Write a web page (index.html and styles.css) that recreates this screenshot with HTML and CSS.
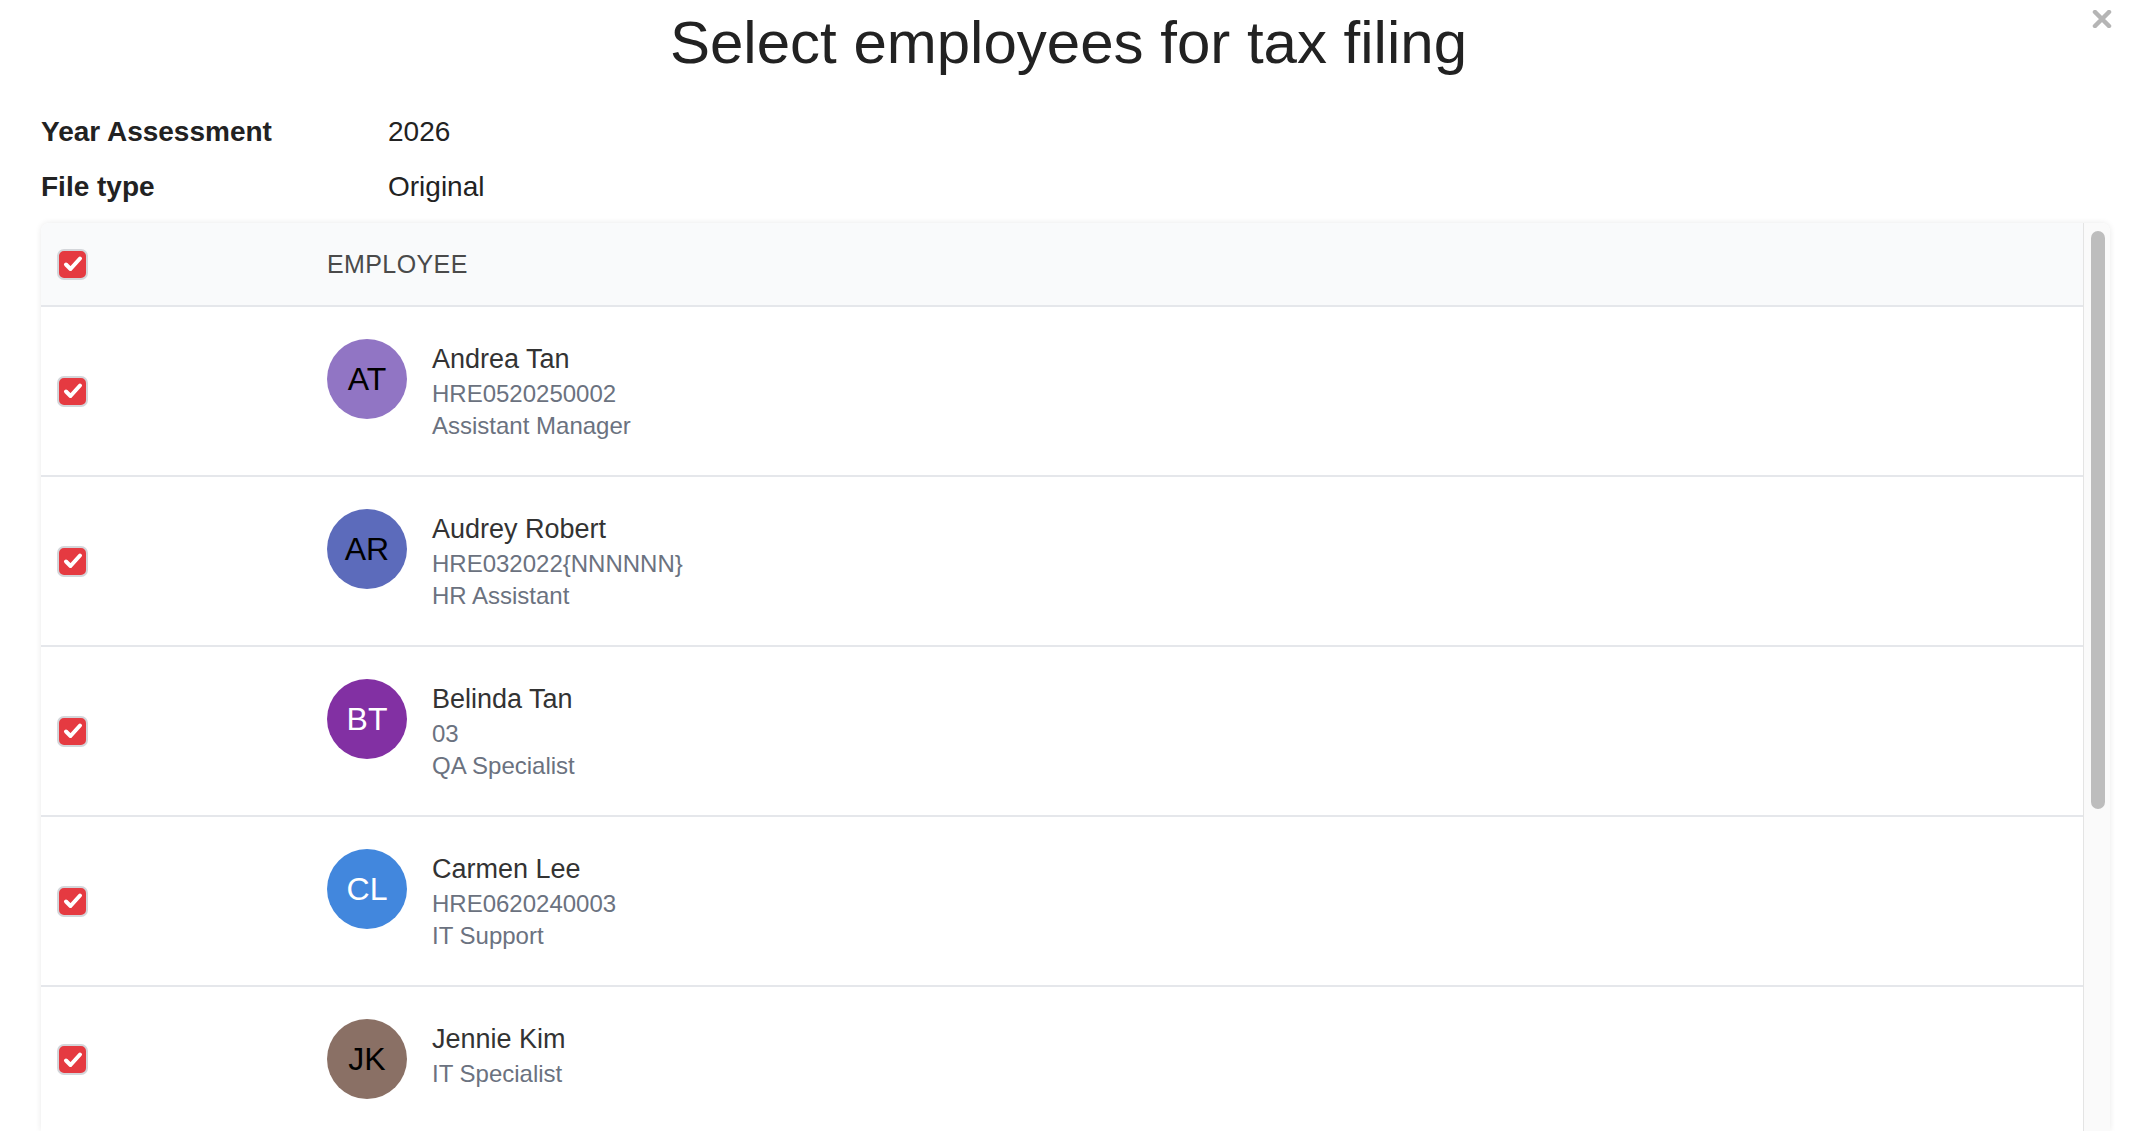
FILE: index.html
```html
<!DOCTYPE html>
<html lang="en">
<head>
  <meta charset="UTF-8" />
  <title>Select employees for tax filing</title>
  <link rel="stylesheet" href="styles.css">
</head>
<body>

<div class="modal">
  <h1 class="modal-title">Select employees for tax filing</h1>
  <button class="close-btn" aria-label="Close">
    <svg width="20" height="18" viewBox="0 0 20 18"><path d="M3 2 L17 16 M17 2 L3 16" stroke="#b5b5b5" stroke-width="4.5" stroke-linecap="round"/></svg>
  </button>

  <div class="info">
    <div class="info-row"><span class="info-label">Year Assessment</span><span>2026</span></div>
    <div class="info-row"><span class="info-label">File type</span><span>Original</span></div>
  </div>

  <div class="table-wrap">
    <div class="emp-list">
      <div class="emp-row emp-head">
        <div class="cell-check"><span class="check"></span></div>
        <div class="head-label">EMPLOYEE</div>
      </div>
      <div id="rows"></div>
    </div>
    <div class="scrollbar"><div class="scroll-thumb"></div></div>
  </div>
</div>

<script>
  const employees = [
    { initials: "AT", name: "Andrea Tan", id: "HRE0520250002", role: "Assistant Manager", color: "#9175c4", text: "#000" },
    { initials: "AR", name: "Audrey Robert", id: "HRE032022{NNNNNN}", role: "HR Assistant", color: "#5c6bbb", text: "#000" },
    { initials: "BT", name: "Belinda Tan", id: "03", role: "QA Specialist", color: "#8230a3", text: "#fff" },
    { initials: "CL", name: "Carmen Lee", id: "HRE0620240003", role: "IT Support", color: "#4287dd", text: "#fff" },
    { initials: "JK", name: "Jennie Kim", id: "", role: "IT Specialist", color: "#8a7065", text: "#000" }
  ];

  const checkSvg = '<svg width="28" height="28" viewBox="0 0 28 28"><path d="M7 14.5 L11.5 19 L21 8.5" fill="none" stroke="#fff" stroke-width="4" stroke-linecap="round" stroke-linejoin="round"/></svg>';

  document.querySelectorAll(".check").forEach(el => el.innerHTML = checkSvg);

  let html = "";
  employees.forEach(emp => {
    html += `
      <div class="emp-row">
        <div class="cell-check"><span class="check">${checkSvg}</span></div>
        <div class="emp">
          <div class="avatar" style="background:${emp.color};color:${emp.text}">${emp.initials}</div>
          <div class="emp-info">
            <div class="emp-name">${emp.name}</div>
            ${emp.id ? `<div class="emp-sub">${emp.id}</div>` : ""}
            <div class="emp-sub">${emp.role}</div>
          </div>
        </div>
      </div>
    `;
  });
  document.getElementById("rows").innerHTML = html;
</script>

</body>
</html>
```

FILE: styles.css
```css
html, body {
  height: 100%;
}

body {
  font-family: "Liberation Sans", Arial, sans-serif;
  margin: 0;
  background: #fff;
  color: #333;
  overflow: hidden;
}

.modal {
  position: relative;
  height: 100%;
  display: flex;
  flex-direction: column;
  padding: 8px 27px 0 41px;
  box-sizing: border-box;
}

.modal-title {
  margin: 0 -27px 0 -41px;
  text-align: center;
  font-size: 60px;
  font-weight: normal;
  color: #222;
  line-height: 69px;
}

.close-btn {
  position: absolute;
  top: 10px;
  right: 25px;
  padding: 0;
  border: none;
  background: none;
  cursor: pointer;
  line-height: 0;
}

.info {
  margin-top: 27px;
}

.info-row {
  display: flex;
  font-size: 28px;
  line-height: 55px;
  color: #222;
}

.info-label {
  width: 347px;
  font-weight: bold;
}

.table-wrap {
  flex: 1;
  min-height: 0;
  margin-top: 9px;
  display: flex;
  overflow: hidden;
  background: #fff;
  border-radius: 8px 8px 0 0;
  box-shadow: 0 0 6px rgba(0, 0, 0, 0.09);
}

.emp-list {
  flex: 1;
  min-width: 0;
}

.scrollbar {
  flex: none;
  width: 27px;
  background: #fafafa;
  border-left: 1px solid #e4e4e4;
  padding: 8px 5px 0 7px;
  box-sizing: border-box;
}

.scroll-thumb {
  height: 578px;
  background: #bdbdbd;
  border-radius: 8px;
}

.emp-row {
  display: grid;
  grid-template-columns: 286px 1fr;
  border-bottom: 2px solid #e5e7eb;
}

.emp-head {
  height: 82px;
  background: #f9fafb;
  align-items: center;
}

.head-label {
  font-size: 25px;
  letter-spacing: 0.4px;
  color: #4a4a4a;
}

.cell-check {
  display: flex;
  align-items: center;
  padding-left: 16px;
}

.check {
  width: 31px;
  height: 31px;
  box-sizing: border-box;
  border: 2px solid #d4d6da;
  border-radius: 7px;
  background: #e53a41;
  display: flex;
  align-items: center;
  justify-content: center;
  overflow: hidden;
}

.check svg {
  flex: none;
}

.emp {
  display: flex;
  align-items: flex-start;
  gap: 25px;
  padding: 32px 0 33px;
}

.avatar {
  width: 80px;
  height: 80px;
  border-radius: 50%;
  flex: none;
  display: flex;
  align-items: center;
  justify-content: center;
  font-size: 32px;
}

.emp-info {
  padding-top: 2px;
}

.emp-name {
  font-size: 27px;
  line-height: 37px;
  color: #333;
}

.emp-sub {
  font-size: 24px;
  line-height: 32px;
  color: #6b7280;
}
```
